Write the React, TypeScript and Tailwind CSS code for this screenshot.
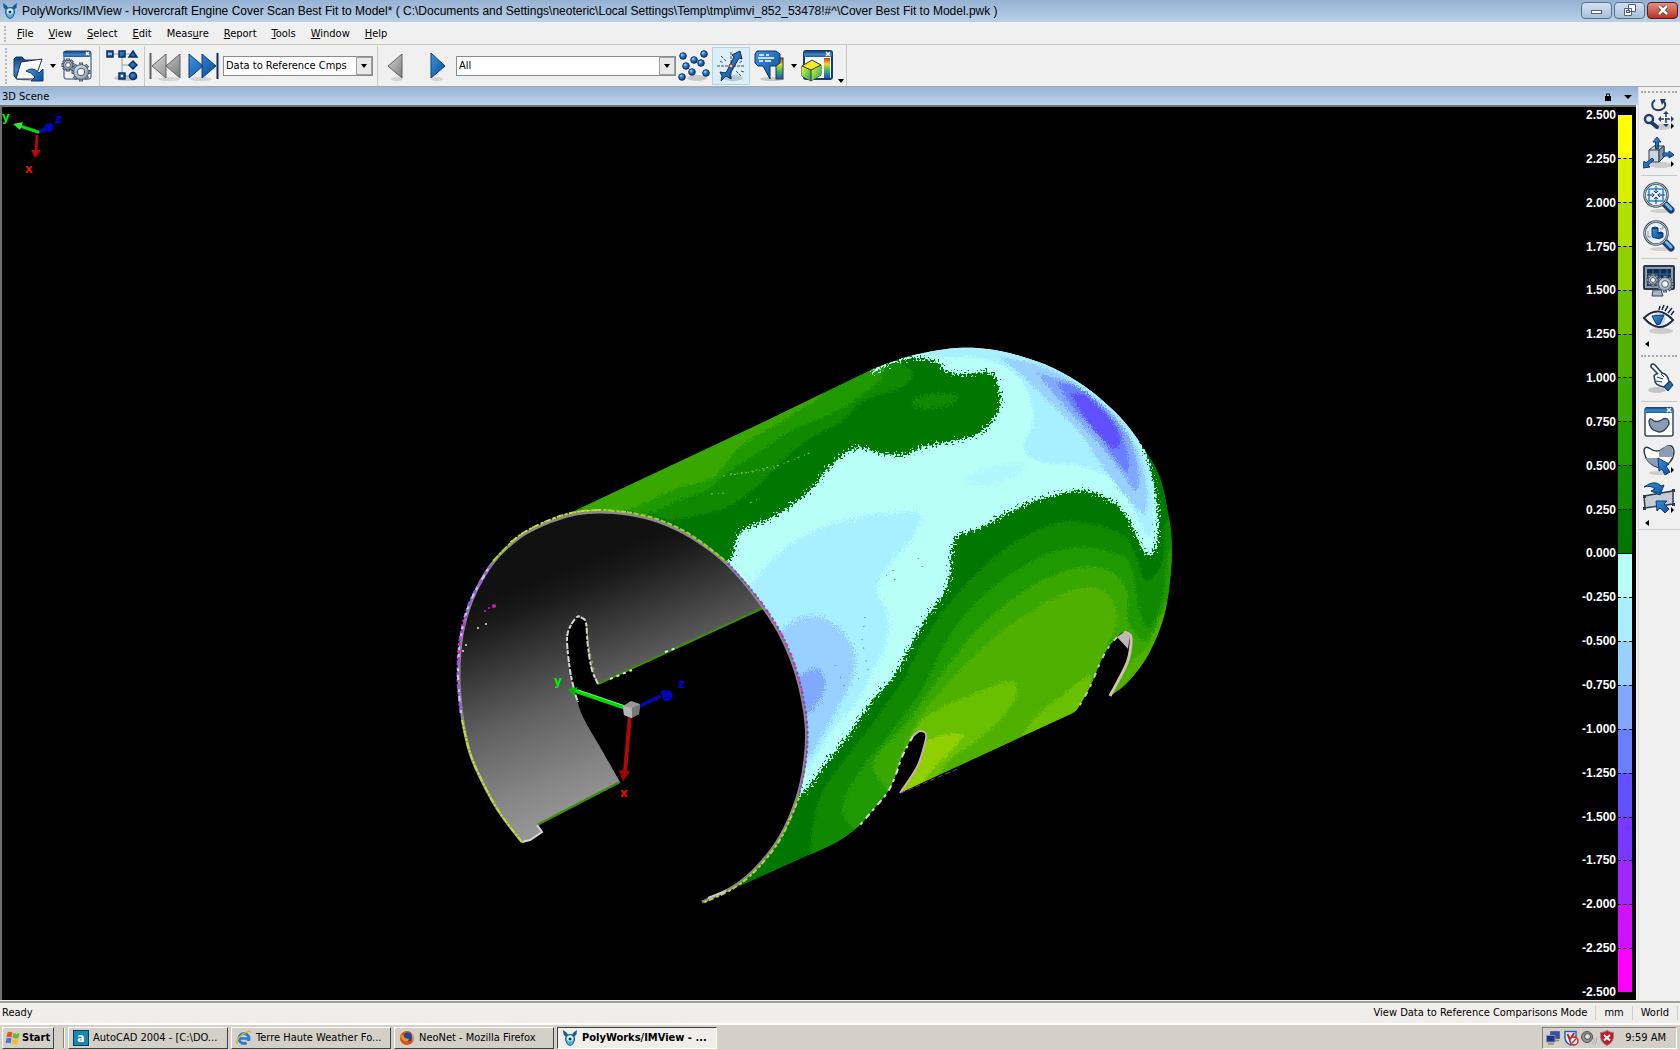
import type { ReactNode } from "react"

/* ---------- helpers ---------- */

type Pt = [number, number]

const pts = (s: string): Pt[] => s.trim().split(/\s+/).map((p) => p.split(",").map(Number) as Pt)

// Smooth run through the points, sharp at both ends
function curve(s: string) {
  const p = pts(s)
  let d = ""
  for (let i = 0; i < p.length - 1; i++) {
    const a = p[i - 1] ?? p[i]
    const b = p[i]
    const c = p[i + 1]
    const e = p[i + 2] ?? c
    const x1 = b[0] + (c[0] - a[0]) / 6
    const y1 = b[1] + (c[1] - a[1]) / 6
    const x2 = c[0] - (e[0] - b[0]) / 6
    const y2 = c[1] - (e[1] - b[1]) / 6
    d += `C${x1.toFixed(1)},${y1.toFixed(1)} ${x2.toFixed(1)},${y2.toFixed(1)} ${c[0]},${c[1]}`
  }
  return d
}

const open = (s: string) => `M${s.trim().split(/\s+/)[0]}${curve(s)}`
const shape = (s: string) => `${open(s)}Z`

/* ---------- scene geometry ---------- */

const rimLeft = "522,842 500,813 483,783 470,753 462,715 459,675 462,635 472,600 491,565 520,537 552,521 576,514 600,512"
const rimRight =
  "600,512 627,514 657,521 691,537 727,564 760,603 783,640 798,680 806,723 805,760 797,798 780,837 757,867 733,887 702,902"
const rim = `${rimLeft} ${rimRight.slice(8)}`

const body =
  `M552,521${curve("552,521 576,514 600,512 " + rimRight.slice(8))}L747,883` +
  curve("747,883 800,859 837,842 860,825 873,810 887,793 895,777 902,757 913,736 920,731 926,734 925,743 917,767 900,793") +
  "L1073,713" +
  curve("1073,713 1078,708 1090,687 1100,663 1108,648 1117,637 1124,632 1130,635 1131,643 1127,663 1110,696") +
  curve(
    "1110,696 1127,683 1147,657 1162,623 1169,590 1172,550 1169,517 1160,477 1143,447 1120,417 1087,388 1053,368 1020,356 987,349 957,348 923,353 900,359 873,369",
  ) +
  "L753,427L570,513Z"

const interior =
  open(`${rimLeft} 627,514 657,521 691,537 727,564 763,608`) +
  "L598,684" +
  curve("598,684 592,670 588,647 586,623 582,618 577,617 570,627 567,640 570,670 575,693 583,717 600,747 620,782") +
  "L537,825L542,832L530,840Z"

const greens = [
  { fill: "#108800", d: "670,520 700,515 727,507 753,490 780,463 807,440 840,423 860,403 873,397 903,387 913,373 903,366 880,355 700,420 600,500" },
  { fill: "#209800", d: "645,516 680,500 707,490 727,473 767,447 793,430 840,410 868,390 882,376 865,366 700,430 590,500" },
  { fill: "#38a800", d: "625,512 673,490 713,477 740,447 787,418 822,395 800,390 700,430 560,510" },
  { fill: "#108800", d: "810,856 813,823 823,790 847,757 870,727 903,680 930,630 967,583 1013,543 1057,523 1087,523 1113,530 1130,543 1143,577 1153,577 1163,557 1167,520 1190,520 1200,700 1000,780 880,850" },
  { fill: "#209800", d: "862,838 846,820 843,803 860,770 887,737 923,687 953,630 993,587 1040,557 1080,547 1113,553 1130,563 1140,613 1150,627 1163,597 1170,550 1190,560 1190,700 1000,780 900,830" },
  { fill: "#38a800", d: "886,788 873,767 883,747 907,723 937,680 980,627 1030,587 1080,567 1113,573 1127,593 1128,620 1142,640 1153,632 1168,600 1180,620 1170,700 1000,780 900,810" },
  { fill: "#50b000", d: "895,775 903,750 923,713 967,663 1013,623 1057,597 1090,587 1110,597 1117,620 1110,640 1100,665 1080,720 1000,770 900,800" },
  { fill: "#50b000", d: "1110,700 1128,665 1140,655 1152,640 1164,614 1170,640 1130,700" },
  { fill: "#68c000", d: "904,790 906,752 920,722 940,708 967,697 1010,681 1016,697 1000,720 975,742 950,760 930,790" },
  { fill: "#68c000", d: "1018,742 1035,718 1060,697 1090,676 1085,700 1074,716 1040,740" },
  { fill: "#90d000", d: "895,800 918,764 928,740 963,734 950,752 932,770 920,790" },
]

const light =
  "700,575 730,560 740,533 773,517 807,493 827,470 855,448 880,453 903,455 923,447 967,438 987,427 1000,407 999,390 994,375 983,372 965,374 947,372 937,362 913,358 890,364 872,371 880,340 960,320 1080,360 1130,420 1143,447 1153,480 1158,513 1157,543 1152,553 1145,553 1137,537 1127,517 1113,502 1090,492 1073,491 1040,499 1007,513 980,528 957,537 951,557 947,587 927,617 910,647 893,677 873,700 847,737 823,767 803,792 770,800 730,650"

const blues = [
  { fill: "#a8f0ff", d: "740,600 757,577 775,557 800,538 830,525 863,516 893,513 920,514 913,537 890,563 877,590 887,613 888,637 877,663 860,697 833,730 808,769 780,780" },
  { fill: "#98d0ff", d: "770,645 785,628 800,618 823,618 843,633 855,653 853,677 837,710 822,736 806,757 780,740" },
  { fill: "#80a8ff", d: "785,685 800,676 817,668 825,683 818,703 807,714 790,715" },
  { fill: "#a8f0ff", d: "923,351 945,357 980,358 1010,370 1028,392 1033,423 1024,450 1047,463 1080,466 1113,480 1130,503 1143,529 1149,536 1153,527 1152,480 1141,449 1110,395 1040,340 960,335" },
  { fill: "#98d0ff", d: "998,356 1020,373 1047,400 1080,433 1103,467 1123,493 1140,512 1146,510 1146,480 1134,444 1107,408 1067,378 1033,363" },
  { fill: "#80a8ff", d: "1037,373 1057,397 1080,423 1107,453 1127,480 1136,491 1139,473 1127,434 1100,403 1070,382" },
  { fill: "#6880ff", d: "1057,382 1073,407 1100,437 1124,470 1129,464 1122,434 1110,416 1090,396 1072,385" },
  { fill: "#6050ff", d: "1070,393 1083,415 1103,440 1116,449 1120,441 1116,428 1103,411 1085,395" },
]

const cyanPatch = "963,480 980,470 1010,464 1024,466 1015,476 985,487"

const scale = [
  "bg-[#ffff00]", "bg-[#d8f000]", "bg-[#b0e000]", "bg-[#90d000]", "bg-[#68c000]",
  "bg-[#50b000]", "bg-[#38a800]", "bg-[#209800]", "bg-[#108800]", "bg-[#007800]",
  "bg-[#b8fff8]", "bg-[#a8f0ff]", "bg-[#98d0ff]", "bg-[#80a8ff]", "bg-[#6880ff]",
  "bg-[#6050ff]", "bg-[#7838ff]", "bg-[#a028ff]", "bg-[#d010ff]", "bg-[#ff00ff]",
]
const labels = Array.from({ length: 21 }, (_, i) => (2.5 - i * 0.25).toFixed(3))

const menus: [string, string, string][] = [
  ["", "F", "ile"], ["", "V", "iew"], ["", "S", "elect"], ["", "E", "dit"], ["Meas", "u", "re"],
  ["", "R", "eport"], ["", "T", "ools"], ["", "W", "indow"], ["", "H", "elp"],
]

function Scene() {
  return (
    <svg className="absolute inset-0 w-full h-full" viewBox="2 107 1634 893" role="img" aria-label="Deviation map of the scanned engine cover">
      <defs>
        <clipPath id="body"><path d={body} /></clipPath>
        <linearGradient id="inside" gradientUnits="userSpaceOnUse" x1="583" y1="560" x2="673" y2="786">
          <stop offset="0" stopColor="#111" />
          <stop offset="0.1" stopColor="#1a1a1a" />
          <stop offset="0.3" stopColor="#3c3c3c" />
          <stop offset="0.52" stopColor="#626262" />
          <stop offset="0.8" stopColor="#858585" />
          <stop offset="1" stopColor="#999" />
        </linearGradient>
        <filter id="grain" filterUnits="userSpaceOnUse" x="400" y="300" width="820" height="640" colorInterpolationFilters="sRGB">
          <feTurbulence type="fractalNoise" baseFrequency="0.7" numOctaves="2" seed="4" />
          <feDisplacementMap in="SourceGraphic" scale="10" xChannelSelector="R" yChannelSelector="G" />
        </filter>
        <filter id="speckle" filterUnits="userSpaceOnUse" x="400" y="300" width="820" height="640" colorInterpolationFilters="sRGB">
          <feTurbulence type="fractalNoise" baseFrequency="0.9" numOctaves="2" seed="7" />
          <feDisplacementMap in="SourceGraphic" scale="18" xChannelSelector="R" yChannelSelector="G" />
        </filter>
        <filter id="coarse" filterUnits="userSpaceOnUse" x="400" y="300" width="820" height="640" colorInterpolationFilters="sRGB">
          <feTurbulence type="fractalNoise" baseFrequency="0.5" numOctaves="3" seed="9" />
          <feDisplacementMap in="SourceGraphic" scale="18" xChannelSelector="R" yChannelSelector="G" />
        </filter>
      </defs>

      {/* inner wall */}
      <path d={interior} fill="url(#inside)" />
      <path d="M763,608L598,684M620,782L537,825" stroke="#3c8c10" strokeWidth="2" fill="none" />
      <path d="M610,679L632,670M665,652L676,648" stroke="#d0f0d0" strokeWidth="2" strokeDasharray="3 4" fill="none" />
      <path
        d={open("598,684 592,670 588,647 586,623 582,618 577,617 570,627 567,640 570,670 575,693 578,702")}
        stroke="#d8d8d0" strokeWidth="2" strokeDasharray="6 1 4 2" fill="none"
      />
      <path d={open("594,670 589,647 587,630")} stroke="#98b850" strokeWidth="1" strokeDasharray="3 4" fill="none" />
      <path d="M537,825L542,832L530,840L522,842" stroke="#d8d8d8" strokeWidth="2" fill="none" />

      {/* outer surface */}
      <g clipPath="url(#body)">
        <path d={body} fill="#007800" />
        <g filter="url(#grain)">
          {greens.map((g, i) => <path key={i} d={shape(g.d)} fill={g.fill} />)}
        </g>
        <path d={shape("910,402 925,396 945,393 957,397 950,405 925,410")} fill="#108800" filter="url(#coarse)" />
        <path d={shape(light)} fill="#b8fff8" filter="url(#coarse)" />
        <g filter="url(#speckle)">
          {blues.slice(0, 3).map((b, i) => <path key={i} d={shape(b.d)} fill={b.fill} />)}
          <path d={shape(cyanPatch)} fill="#b0f6fc" />
        </g>
        <g filter="url(#grain)">
          {blues.slice(3).map((b, i) => <path key={i} d={shape(b.d)} fill={b.fill} />)}
        </g>
        <g stroke="#88c868" strokeWidth="1" fill="none" strokeDasharray="2 5 1 3">
          <path d="M723,476L745,473L760,469L780,465L812,452" />
          <path d="M730,474L752,472L775,468" />
          <path d="M711,494L725,493M750,503L760,498" />
        </g>
        <g stroke="#387878" strokeWidth="1" fill="none" strokeDasharray="1 8 1 12">
          <path d="M893,570L897,590M918,558L924,570M865,617L862,640L868,670L846,690L835,665" />
          <path d="M886,575L904,585" />
        </g>
      </g>

      {/* slot edges */}
      <g fill="none" strokeWidth="2">
        <path d={open("900,793 917,767 925,743 926,734 920,731 913,736")} stroke="#c8b0b0" strokeWidth="2" />
        <path d={open("913,736 902,757 895,777 887,793 873,810 860,825")} stroke="#d8d8d0" strokeDasharray="6 5 3 4" />
        <path d="M901,793L960,768" stroke="#8838a0" strokeWidth="1" strokeDasharray="5 3" />
        <path d={open("1110,696 1127,663 1131,643 1130,635 1124,632")} stroke="#d0c0b0" strokeWidth="3" />
        <path d="M1117,637L1124,632L1130,635L1128,649Z" fill="#c0b8b8" stroke="none" />
        <path d={open("1117,637 1108,648 1100,663 1090,687 1078,708")} stroke="#b8c8a0" strokeDasharray="5 7 3 6" />
      </g>

      {/* rim */}
      <g fill="none">
        <path d={open(rim)} stroke="#8a8888" strokeWidth="3" />
        <path d={open("522,842 500,813 483,783 470,753 462,720")} stroke="#c0e030" strokeWidth="2" strokeDasharray="7 1 3 1" />
        <path d={open("461,713 458,675 461,635 471,600 491,565")} stroke="#9858e0" strokeWidth="3" strokeDasharray="5 2 3 2" />
        <path d={open("461,713 458,675 461,635 471,600 491,564")} stroke="#c0c8f8" strokeWidth="2" strokeDasharray="3 9 5 4" />
        <path d={open("459,660 459,645 463,628 467,612")} stroke="#e020d0" strokeWidth="2" strokeDasharray="3 4" />
        <path d={open("493,561 520,535 552,519 576,512 600,510 626,512")} stroke="#a8d820" strokeWidth="2" strokeDasharray="7 2 3 1" />
        <path d={open("510,542 530,529 552,519 576,512 600,510")} stroke="#f0f040" strokeWidth="1" strokeDasharray="3 3" />
        <path d={open("627,512 657,519 691,535 727,562")} stroke="#a0d028" strokeWidth="2" strokeDasharray="5 2" />
        <path d={open("728,563 761,602 784,639 799,679 807,723 806,760 799,795")} stroke="#8840d8" strokeWidth="2" strokeDasharray="3 2 2 3" />
        <path d={open("761,602 784,639 799,679 803,700")} stroke="#d838c8" strokeWidth="2" strokeDasharray="3 9" />
        <path d={open("799,798 781,838 758,868 734,888 703,903")} stroke="#b0d828" strokeWidth="2" strokeDasharray="3 3 5 2" />
        <path d="M708,898L726,891" stroke="#c8c8d8" strokeWidth="2" />
      </g>
      <g fill="#c020c0">
        <circle cx="494" cy="606" r="2" /><circle cx="489" cy="608" r="1" /><circle cx="485" cy="611" r="1" />
        <g fill="#f0e0e8">
          <circle cx="486" cy="624" r="1" /><circle cx="478" cy="628" r="1" /><circle cx="466" cy="645" r="1" /><circle cx="463" cy="651" r="1" />
        </g>
      </g>

      {/* object axes */}
      <g strokeLinecap="round">
        <path d="M631,710L659,697" stroke="#0808a8" strokeWidth="4" />
        <path d="M660,691L669,690L673,694L671,700L664,701Z" fill="#0404b8" />
        <path d="M630,715L625,772" stroke="#b00808" strokeWidth="4" />
        <path d="M619,770L630,771L623,782Z" fill="#a00404" />
        <path d="M629,709L576,691" stroke="#08d808" strokeWidth="4" />
        <path d="M631,708L578,690" stroke="#60f860" strokeWidth="1" />
        <path d="M568,689L578,687L574,696Z" fill="#08b808" />
        <path d="M623,706L631,701L640,704L639,714L631,718L624,715Z" fill="#989898" />
        <path d="M623,706L632,708L632,718L624,715Z" fill="#b4b4b4" />
        <path d="M632,708L640,704L639,714L632,718Z" fill="#787878" />
      </g>
      {/* corner axes */}
      <g strokeLinecap="round">
        <path d="M39,132L48,128" stroke="#0808a8" strokeWidth="4" />
        <path d="M45,124L52,123L54,128L50,132L46,131Z" fill="#0404c8" />
        <path d="M37,136L36,152" stroke="#b00808" strokeWidth="3" />
        <path d="M31,150L41,150L35,158Z" fill="#c00808" />
        <path d="M38,132L20,126" stroke="#08d808" strokeWidth="3" />
        <path d="M13,124L23,122L20,130Z" fill="#30e830" />
      </g>
      <g className="font-['DejaVu_Sans',sans-serif] text-[12px] font-bold">
        <text x="554" y="685" fill="#00f000">y</text>
        <text x="678" y="688" fill="#0000e0">z</text>
        <text x="620" y="797" fill="#e81010">x</text>
        <text x="2" y="121" fill="#00f000">y</text>
        <text x="55" y="123" fill="#0000e0">z</text>
        <text x="25" y="173" fill="#e81010">x</text>
      </g>
    </svg>
  )
}

/* ---------- icons ---------- */

function Icon({ children, className = "w-8 h-8" }: { children: ReactNode; className?: string }) {
  return <svg className={`${className} shrink-0`} viewBox="0 0 32 32" aria-hidden="true">{children}</svg>
}

function Defs() {
  return (
    <svg className="absolute w-0 h-0" aria-hidden="true">
      <defs>
        <linearGradient id="blue" x1="0" y1="0" x2="1" y2="1"><stop offset="0" stopColor="#3c94e0" /><stop offset="1" stopColor="#0c4c98" /></linearGradient>
        <linearGradient id="navy" x1="0" y1="0" x2="0" y2="1"><stop offset="0" stopColor="#123c74" /><stop offset="0.6" stopColor="#3c88cc" /><stop offset="1" stopColor="#1c5c9c" /></linearGradient>
        <linearGradient id="grey" x1="0" y1="0" x2="1" y2="1"><stop offset="0" stopColor="#d8d8d8" /><stop offset="1" stopColor="#7c7c7c" /></linearGradient>
        <linearGradient id="steel" x1="0" y1="0" x2="1" y2="1"><stop offset="0" stopColor="#dde3ea" /><stop offset="1" stopColor="#8c9caf" /></linearGradient>
        <linearGradient id="rainbow" x1="0" y1="0" x2="0" y2="1">
          <stop offset="0" stopColor="#e03010" /><stop offset="0.3" stopColor="#f0d820" /><stop offset="0.6" stopColor="#40c060" /><stop offset="1" stopColor="#2050d0" />
        </linearGradient>
        <linearGradient id="facet" x1="0" y1="0" x2="1" y2="1"><stop offset="0" stopColor="#f0f040" /><stop offset="0.5" stopColor="#80d040" /><stop offset="1" stopColor="#2888c0" /></linearGradient>
        <radialGradient id="ball" cx="0.35" cy="0.3" r="0.7"><stop offset="0" stopColor="#a0d8ff" /><stop offset="0.5" stopColor="#2878c4" /><stop offset="1" stopColor="#0c3c80" /></radialGradient>
      </defs>
    </svg>
  )
}

// Toothed wheel: eight teeth laid round the rim
const gear = (cx: number, cy: number, r: number) => (
  <g stroke="#4c5c70">
    {[0, 45, 90, 135].map((a) => (
      <rect key={a} x={cx - 1.5} y={cy - r} width="3" height={r * 2} fill="#a8b4c4" transform={`rotate(${a} ${cx} ${cy})`} />
    ))}
    <circle cx={cx} cy={cy} r={r - 1.6} fill="url(#steel)" />
    <circle cx={cx} cy={cy} r={r * 0.42} fill="#f4f4f4" />
  </g>
)

const OpenIcon = () => (
  <Icon>
    <ellipse cx="18" cy="29" rx="13" ry="2" fill="#c8c8c8" />
    <path d="M1,9L3,7H9L12,10H23V14L16,29H4L1,26Z" fill="url(#navy)" stroke="#123c74" />
    <path d="M8,12L29,9L22,29H3Z" fill="#fafafa" stroke="#28323c" />
    <path d="M13,21Q20,16 26,23L30,19V31H18L22,27Q18,22 13,21Z" fill="url(#blue)" stroke="#0c3c74" />
  </Icon>
)
const GearsIcon = () => (
  <Icon>
    <rect x="3" y="1" width="27" height="28" rx="2" fill="#f0f0f0" stroke="#28486c" />
    <rect x="2" y="1" width="28" height="6" rx="2" fill="url(#navy)" />
    <path d="M25,2L28,5M28,2L25,5" stroke="#fff" strokeWidth="1.5" />
    {gear(7, 15, 6)}
    {gear(20, 22, 9)}
  </Icon>
)
const TreeIcon = () => (
  <Icon>
    <ellipse cx="20" cy="28" rx="12" ry="3" fill="#c8c8c8" />
    <path d="M7,4H26M16,4V26H26M16,15H26" stroke="#98a0a8" fill="none" />
    <g fill="url(#blue)" stroke="#0c2c60" strokeWidth="1.5">
      <rect x="1" y="1" width="6" height="6" /><rect x="13" y="1" width="6" height="6" /><path d="M27,1L31,7H23Z" />
      <path d="M27,11L31,15L27,19L23,15Z" /><rect x="13" y="23" width="6" height="6" /><circle cx="27" cy="26" r="3.5" />
    </g>
    <path d="M2,4H6" stroke="#fff" /><rect x="15" y="25" width="2" height="2" fill="#fff" />
  </Icon>
)
const RewindIcon = () => (
  <Icon>
    <ellipse cx="20" cy="29" rx="11" ry="2" fill="#d4d4d4" />
    <path d="M1.5,3V29" stroke="#606060" strokeWidth="2" />
    <path d="M17,4L3,16L17,28ZM31,4L17,16L31,28Z" fill="url(#grey)" stroke="#606060" />
  </Icon>
)
const ForwardIcon = () => (
  <Icon>
    <ellipse cx="14" cy="29" rx="11" ry="2" fill="#d4d4d4" />
    <path d="M30.5,3V29" stroke="#182c50" strokeWidth="2" />
    <path d="M2,4L16,16L2,28ZM15,4L29,16L15,28Z" fill="url(#blue)" stroke="#0c3c74" />
  </Icon>
)
const PrevIcon = () => (
  <Icon>
    <ellipse cx="15" cy="29" rx="6" ry="2" fill="#d4d4d4" />
    <path d="M20,4L6,16L20,28Z" fill="url(#grey)" stroke="#606060" />
  </Icon>
)
const NextIcon = () => (
  <Icon>
    <ellipse cx="15" cy="29" rx="6" ry="2" fill="#d4d4d4" />
    <path d="M9,3L23,16L9,28Z" fill="url(#blue)" stroke="#0c3c74" />
  </Icon>
)
const PointsIcon = () => (
  <Icon>
    <ellipse cx="19" cy="28" rx="10" ry="3" fill="#c8c8c8" />
    <g fill="url(#ball)" stroke="#0c3468">
      {pts("5,6 26,4 16,10 8,16 23,13 14,22 28,23 4,27").map(([x, y]) => <circle key={x} cx={x} cy={y} r="3.3" />)}
    </g>
  </Icon>
)
const CompareIcon = () => (
  <Icon>
    <ellipse cx="18" cy="28" rx="10" ry="3" fill="#b8c8d0" />
    <path d="M16,2V30M2,16H30M6,6L11,11M26,26L21,21M8,25L12,21M5,11L8,13M27,11L24,13M26,21L29,22" stroke="#484848" strokeDasharray="3 1" />
    <path d="M25,1L27,9L24,8L15,24L16,29L11,26L6,31L7,26L5,22L11,23L19,7L17,5Z" fill="url(#blue)" stroke="#0c2c60" />
    <circle cx="16" cy="16" r="2" fill="#c0d8f0" stroke="#802020" />
  </Icon>
)
const CalloutIcon = () => (
  <Icon>
    <ellipse cx="18" cy="29" rx="12" ry="2" fill="#c8c8c8" />
    <rect x="22" y="8" width="7" height="21" fill="url(#rainbow)" stroke="#303030" />
    <path d="M3,1H22L26,4V13L22,16H16V29L9,16H4L1,13V4Z" fill="url(#blue)" stroke="#0c3468" />
    <path d="M5,5H10M12,5H15M4,8H20M5,11H9M11,11H17" stroke="#fff" strokeWidth="1.5" />
  </Icon>
)
const CubeWindowIcon = () => (
  <Icon>
    <rect x="3" y="1" width="28" height="28" rx="2" fill="#f8f8f8" stroke="#183c6c" strokeWidth="2" />
    <rect x="3" y="1" width="28" height="6" rx="2" fill="url(#navy)" />
    <path d="M25,2L29,6M29,2L25,6" stroke="#fff" strokeWidth="1.5" />
    <rect x="23" y="8" width="6" height="20" fill="url(#rainbow)" />
    <path d="M1,16L11,10L20,15V25L10,31L1,26Z" fill="#f0e830" stroke="#284018" />
    <path d="M1,16L10,20V31L1,26Z" fill="url(#facet)" /><path d="M10,20L20,15V25L10,31Z" fill="url(#facet)" />
    <path d="M1,16L10,20L20,15M10,20V31" fill="none" stroke="#284018" />
  </Icon>
)

const RotateIcon = () => (
  <Icon>
    <path d="M12,1Q7,5 11,10Q16,13 21,9Q24,5 20,2" fill="none" stroke="#243c68" strokeWidth="2" />
    <path d="M17,0H23L19,6Z" fill="#243c68" />
    <ellipse cx="19" cy="28" rx="9" ry="3" fill="#ccc" />
    <circle cx="6" cy="20" r="4" fill="#e0f0fc" stroke="#243c68" strokeWidth="2.5" />
    <path d="M9,24L14,28" stroke="#243c68" strokeWidth="4" strokeLinecap="round" />
    <path d="M23,13V27M16,20H30" stroke="#243c68" strokeWidth="1.5" strokeDasharray="5 1" />
    <path d="M23,12L26,15H20ZM23,28L26,25H20ZM15,20L18,17V23ZM31,20L28,17V23Z" fill="#243c68" />
    <path d="M28,24V30L31,27Z" fill="#000" />
  </Icon>
)
const AxesIcon = () => (
  <Icon>
    <ellipse cx="18" cy="28" rx="12" ry="3" fill="#ccc" />
    <path d="M6,13L11,9H21V20L16,25H6Z" fill="#cdd5de" stroke="#303c48" />
    <path d="M6,13H16V25M16,13L21,9" fill="none" stroke="#303c48" /><path d="M16,13L21,9V20L16,25Z" fill="#8894a4" stroke="#303c48" />
    <g fill="url(#blue)" stroke="#0c3c74"><path d="M14,0L18,5H15.500V12H12.500V5H10Z" /><path d="M31,18L26,14V16H20V19H26V21Z" /><path d="M0,31L1,24L3,26L9,21L11,23L5,28L7,30Z" /></g>
    <path d="M28,24V30L31,27Z" fill="#000" />
  </Icon>
)
const Magnifier = ({ children }: { children: ReactNode }) => (
  <Icon>
    <ellipse cx="18" cy="29" rx="11" ry="2" fill="#d0d0d0" />
    <path d="M22,22L28,28" stroke="#16406e" strokeWidth="7" strokeLinecap="round" />
    <path d="M23,22L28,27" stroke="#70b8ec" strokeWidth="3" strokeLinecap="round" />
    <circle cx="13" cy="13" r="11.500" fill="#e4f0f4" stroke="#404c58" strokeWidth="2.500" />
    <circle cx="13" cy="13" r="11.500" fill="none" stroke="#b8c8d4" />
    {children}
  </Icon>
)
const ZoomFitIcon = () => (
  <Magnifier>
    <rect x="6" y="7" width="14" height="12" fill="none" stroke="#3484c4" strokeWidth="1.500" />
    <path d="M13,4V11M13,15V22M4,13H11M15,13H22M11,9L13,11L15,9M11,17L13,15L15,17M9,11L11,13L9,15M17,11L15,13L17,15" stroke="#183c6c" fill="none" />
  </Magnifier>
)
const ZoomObjIcon = () => (
  <Magnifier>
    <path d="M5,11V17H8M20,6V9H17" fill="none" stroke="#88949c" />
    <path d="M9,8Q12,6 15,8V13Q18,11 20,13V17Q16,20 13,18Q9,18 9,16Z" fill="url(#blue)" stroke="#0c3468" />
    <path d="M9,8Q12,10 15,8M14,13Q17,15 20,13" stroke="#0c3468" fill="none" />
  </Magnifier>
)
const MonitorIcon = () => (
  <Icon>
    <rect x="1" y="1" width="30" height="23" rx="1" fill="#8c9cac" stroke="#283848" strokeWidth="2" />
    <rect x="4" y="4" width="24" height="17" fill="#142c4c" />
    <path d="M4,9H28M4,15H28M10,4V21M17,4V21M24,4V21" stroke="#2c6ca4" />
    {gear(10, 15, 6)}
    {gear(22, 19, 8)}
    <path d="M10,25H18L20,31H9Z" fill="#a8b4c0" stroke="#384858" />
  </Icon>
)
const EyeIcon = () => (
  <Icon>
    <ellipse cx="18" cy="28" rx="12" ry="3" fill="#ccc" />
    <path d="M19,7L21,2M22,8L25,3M25,10L29,5M28,12L31,8M16,7L17,3" stroke="#1c2c48" strokeWidth="1.500" />
    <path d="M1,15Q15,1 30,17Q16,32 1,15Z" fill="#fff" stroke="#1c2c48" strokeWidth="2" />
    <circle cx="16" cy="16" r="6.500" fill="#c0d8e8" />
    <path d="M9,13L21,12L17,21L14,22Z" fill="url(#blue)" stroke="#0c3468" />
  </Icon>
)
const HandIcon = () => (
  <Icon>
    <ellipse cx="14" cy="27" rx="9" ry="3" fill="#c4c4c4" />
    <path d="M8,2Q10,0 12,2L19,10Q25,11 26,19L21,24Q12,22 12,18L11,13Q13,10 15,11L8,4Z" fill="#f4f8fc" stroke="#283848" strokeWidth="1.500" />
    <path d="M14,14L20,16M13,18L19,19M18,11L21,14" stroke="#283848" fill="none" />
    <path d="M21,24L27,18L30,22L25,28Z" fill="#2468a4" stroke="#123458" />
  </Icon>
)
const RegionWindowIcon = () => (
  <Icon>
    <rect x="2" y="2" width="28" height="28" rx="2" fill="#fff" stroke="#384858" strokeWidth="1.500" />
    <rect x="2" y="1" width="28" height="6" rx="2" fill="url(#navy)" />
    <path d="M24,2L28,6M28,2L24,6" stroke="#fff" strokeWidth="1.500" />
    <path d="M8,13Q14,18 20,13Q26,11 26,18Q22,26 16,26Q6,24 6,15Q7,12 8,13Z" fill="#8c9cb4" stroke="#384858" strokeWidth="1.500" />
  </Icon>
)
const RegionPickIcon = () => (
  <Icon>
    <ellipse cx="16" cy="29" rx="10" ry="2" fill="#ccc" />
    <path d="M1,6Q2,2 6,4Q14,10 21,4Q30,-2 31,8Q30,20 17,24Q2,20 1,6Z" fill="#fff" stroke="#303c48" strokeWidth="1.500" />
    <path d="M16,7Q20,5 23,2Q31,0 30,13H16Z" fill="#8c9cb4" /><path d="M3,14H16V23Q6,21 3,14Z" fill="#8c9cb4" />
    <path d="M15,14L26,20L23,22L27,28L22,31L19,25L16,27Z" fill="url(#blue)" stroke="#0c3c74" />
    <path d="M28,23V29L31,26Z" fill="#000" />
  </Icon>
)
const TransformIcon = () => (
  <Icon>
    <path d="M1,14L30,9V22L2,26Z" fill="#c4ccd8" stroke="#303c48" strokeWidth="1.500" />
    <path d="M0,13h3v3h-3zM29,7h3v3h-3zM29,21h3v3h-3zM0,25h3v3h-3z" fill="#303c48" />
    <path d="M1,5Q12,-3 18,4L21,3L17,13L8,9L12,7Q8,3 1,5Z" fill="url(#blue)" stroke="#0c3c74" />
    <path d="M13,19H24L21,22L26,27L22,31L17,26L14,29Z" fill="url(#blue)" stroke="#0c3c74" />
    <path d="M28,25V31L31,28Z" fill="#000" />
  </Icon>
)

const MascotIcon = () => (
  <Icon className="w-4 h-4">
    <path d="M2,0L9,5L14,12L9,15L3,9ZM30,0L23,5L18,12L23,15L29,9Z" fill="#1c5c90" />
    <path d="M16,9Q26,10 25,20Q22,31 16,31Q10,31 7,20Q6,10 16,9Z" fill="#58b0dc" stroke="#1c5c90" strokeWidth="2" />
    <circle cx="16" cy="17" r="6" fill="#e0f4fc" /><circle cx="16" cy="18" r="3" fill="#103858" />
  </Icon>
)

/* ---------- chrome ---------- */

const Sep = () => <div className="w-px h-10 bg-[#c8c8c4] shrink-0" />
const Caret = () => <svg className="w-[6px] h-[4px] shrink-0" viewBox="0 0 6 4" aria-hidden="true"><path d="M0,0H6L3,4Z" /></svg>

function ToolButton({ label, children, className = "" }: { label: string; children: ReactNode; className?: string }) {
  return (
    <button type="button" aria-label={label} className={`flex items-center justify-center shrink-0 ${className}`}>
      {children}
    </button>
  )
}

function Combo({ label, value, className }: { label: string; value: string; className: string }) {
  return (
    <div className={`flex h-5 bg-white border border-[#8c8c90] shrink-0 ${className}`}>
      <select aria-label={label} className="flex-1 min-w-0 appearance-none bg-transparent pl-0.5 outline-none">
        <option>{value}</option>
      </select>
      <span className="w-4 flex items-center justify-center bg-[#e8e8e8] border border-[#a0a0a4] pointer-events-none">
        <Caret />
      </span>
    </div>
  )
}

const Grip = () => <div className="mx-auto w-9 border-t-2 border-dotted border-[#a8a8a8]" />
const Rule = () => <div className="w-9 h-px bg-[#c8c8c4] shrink-0" />
const Left = () => <svg className="w-1 h-[6px] self-start ml-1.5" viewBox="0 0 4 6" aria-hidden="true"><path d="M4,0V6L0,3Z" /></svg>

function Task({ label, icon, active }: { label: string; icon: ReactNode; active?: boolean }) {
  return (
    <button
      type="button"
      className={
        active
          ? "w-40 h-[22px] px-1 flex items-center gap-1 font-bold bg-[#f0eeea] border border-t-[#404040] border-l-[#404040] border-r-white border-b-white"
          : "w-40 h-[22px] px-1 flex items-center gap-1 bg-[#d4d0c8] border border-t-white border-l-white border-r-[#404040] border-b-[#404040]"
      }
    >
      {icon}
      <span className="whitespace-nowrap">{label}</span>
    </button>
  )
}

export default function App() {
  return (
    <div className="h-screen flex flex-col overflow-hidden bg-[#f0f0f0] text-black text-[11px] leading-[14px] font-['DejaVu_Sans_Condensed','DejaVu_Sans',sans-serif]">
      <Defs />

      {/* Title bar */}
      <header className="h-[22px] shrink-0 flex items-center pl-0.5 pr-0.5 bg-linear-to-b from-[#96b2d2] to-[#bad0e8]">
        <MascotIcon />
        <h1 className="flex-1 ml-1 text-[12px] font-['Liberation_Sans',Arial,sans-serif] whitespace-nowrap">
          PolyWorks/IMView - Hovercraft Engine Cover Scan Best Fit to Model* ( C:\Documents and Settings\neoteric\Local Settings\Temp\tmp\imvi_852_53478!#^\Cover Best Fit to Model.pwk )
        </h1>
        <div className="flex gap-0.5 pb-0.5">
          <button type="button" aria-label="Minimize" className="w-[31px] h-[17px] rounded-sm border border-[#58708c] bg-linear-to-b from-[#d0e0f0] to-[#a8c0dc] flex justify-center items-end pb-1">
            <span className="w-[11px] h-1 bg-white border border-[#506078]" />
          </button>
          <button type="button" aria-label="Restore" className="w-[31px] h-[17px] rounded-sm border border-[#58708c] bg-linear-to-b from-[#d0e0f0] to-[#a8c0dc] flex justify-center items-center">
            <svg className="w-3 h-3" viewBox="0 0 12 12"><path d="M4.500,.5H11.500V7.500H4.500ZM.5,4.500H7.500V11.500H.5Z" fill="#fff" stroke="#506078" /><rect x="2.500" y="6.500" width="3" height="2" fill="#c0d0e4" stroke="#506078" /></svg>
          </button>
          <button type="button" aria-label="Close" className="w-[31px] h-[17px] rounded-sm border border-[#581c18] bg-linear-to-b from-[#e09080] to-[#b83020] flex justify-center items-center">
            <svg className="w-3 h-[10px]" viewBox="0 0 12 10"><path d="M2,1L10,9M10,1L2,9" stroke="#603030" strokeWidth="4" /><path d="M2,1L10,9M10,1L2,9" stroke="#fff" strokeWidth="2.500" /></svg>
          </button>
        </div>
      </header>

      {/* Menu */}
      <nav className="h-[23px] shrink-0 flex items-center pt-0.5 border-b border-[#c8c8c0]">
        <div className="w-[9px] h-4 flex justify-center"><div className="h-full border-l-2 border-dotted border-[#b8b8b8]" /></div>
        {menus.map(([pre, key, rest]) => (
          <button key={key + rest} type="button" className="pl-2 pr-[7px]">
            {pre}<span className="underline">{key}</span>{rest}
          </button>
        ))}
      </nav>

      {/* Toolbar */}
      <div className="h-[42px] shrink-0 flex border-b border-[#a8a8a8]">
        <div className="flex items-center border-r border-[#c8c8c0] pr-px">
          <div className="w-[13px] h-9 flex justify-center pr-0.5"><div className="h-full border-l-2 border-dotted border-[#b8b8b8]" /></div>
          <ToolButton label="Open"><OpenIcon /></ToolButton>
          <ToolButton label="Open options" className="w-4 h-8"><Caret /></ToolButton>
          <ToolButton label="Options" className="mr-1.5"><GearsIcon /></ToolButton>
          <Sep />
          <ToolButton label="Tree view" className="mx-1.5"><TreeIcon /></ToolButton>
          <Sep />
          <ToolButton label="First" className="ml-1 mr-1.5"><RewindIcon /></ToolButton>
          <ToolButton label="Last"><ForwardIcon /></ToolButton>
          <Combo label="Comparison type" value="Data to Reference Cmps" className="w-[150px] ml-1 mr-1" />
          <Sep />
          <ToolButton label="Previous" className="ml-1 mr-2"><PrevIcon /></ToolButton>
          <ToolButton label="Next" className="mr-0.5"><NextIcon /></ToolButton>
          <Combo label="Filter" value="All" className="w-[220px] mr-0.5" />
          <ToolButton label="Show points" className="mr-0.5"><PointsIcon /></ToolButton>
          <ToolButton label="Compare" className="w-[38px] h-[38px] bg-[#dceef8] border border-[#a8d8f0] mr-1"><CompareIcon /></ToolButton>
          <ToolButton label="Annotations"><CalloutIcon /></ToolButton>
          <ToolButton label="Annotation options" className="w-[15px] h-8"><Caret /></ToolButton>
          <ToolButton label="Color map" className="mr-1"><CubeWindowIcon /></ToolButton>
          <ToolButton label="More buttons" className="w-2 h-9 items-end pb-px"><Caret /></ToolButton>
        </div>
      </div>

      <div className="flex-1 min-h-0 flex">
        {/* 3D scene */}
        <main className="flex-1 min-w-0 flex flex-col">
          <div className="h-[18px] shrink-0 flex items-center pl-0.5 pt-px bg-linear-to-b from-[#98b4d4] to-[#bcd2ec]">
            <h2 className="flex-1">3D Scene</h2>
            <button type="button" aria-label="Lock" className="w-5 flex justify-center">
              <svg className="w-[6px] h-2" viewBox="0 0 6 8"><path d="M0,3H6V8H0Z" /><path d="M1.500,3V1H4.500V3" fill="none" stroke="#000" /></svg>
            </button>
            <button type="button" aria-label="Scene menu" className="w-5 flex justify-center">
              <svg className="w-2 h-1" viewBox="0 0 8 4"><path d="M0,0H8L4,4Z" /></svg>
            </button>
          </div>
          <div className="flex-1 min-h-0 relative bg-black border-t-2 border-l-2 border-[#707070] mr-0.5">
            <Scene />
            {/* Color scale */}
            <div className="absolute inset-y-0 right-1 flex gap-0.5 pt-[2px] pb-[2px] text-white font-bold text-[12px] leading-3 font-['Liberation_Sans',Arial,sans-serif]">
              <ol className="flex flex-col justify-between text-right">
                {labels.map((l) => <li key={l}>{l}</li>)}
              </ol>
              <div className="w-[14px] my-1.5 flex flex-col">
                {scale.map((c, i) => (
                  <div key={c} className={`flex-1 ${c} ${i === 0 ? "" : i === 10 ? "border-t border-black" : "border-t border-dashed border-black"}`} />
                ))}
              </div>
            </div>
          </div>
        </main>

        {/* Side toolbar */}
        <aside className="w-[42px] shrink-0 border-l border-[#e0dcd8]">
          <div className="h-[443px] flex flex-col items-center border-b border-[#c8c8c0] pt-1 pr-0.5">
            <Grip />
            <ToolButton label="Rotate, zoom, pan" className="mt-1.5"><RotateIcon /></ToolButton>
            <ToolButton label="Standard views" className="mt-1.5 mb-1.5"><AxesIcon /></ToolButton>
            <Rule />
            <ToolButton label="Zoom to fit" className="mt-1.5"><ZoomFitIcon /></ToolButton>
            <ToolButton label="Zoom to selection" className="my-1.5"><ZoomObjIcon /></ToolButton>
            <Rule />
            <ToolButton label="Display options" className="mt-1.5"><MonitorIcon /></ToolButton>
            <ToolButton label="Visibility" className="my-1.5"><EyeIcon /></ToolButton>
            <Left />
            <div className="mt-2 w-9"><Grip /></div>
            <ToolButton label="Pick" className="my-1.5"><HandIcon /></ToolButton>
            <Rule />
            <ToolButton label="Region window" className="mt-1"><RegionWindowIcon /></ToolButton>
            <ToolButton label="Select region" className="my-1.5"><RegionPickIcon /></ToolButton>
            <ToolButton label="Transform" className="mb-1.5"><TransformIcon /></ToolButton>
            <Left />
          </div>
        </aside>
      </div>

      {/* Status bar */}
      <footer className="h-[22px] mt-px shrink-0 flex items-center border-t-2 border-[#a0a09c] bg-[#f0eeec]">
        <p className="flex-1 pl-0.5">Ready</p>
        <p className="px-2 border-r border-[#d0ccc8]">View Data to Reference Comparisons Mode</p>
        <p className="px-2 border-r border-[#d0ccc8]">mm</p>
        <p className="px-2 mr-0.5 border-r border-[#d0ccc8]">World</p>
      </footer>

      {/* Taskbar */}
      <div className="h-[27px] shrink-0 flex items-center gap-[3px] px-0.5 bg-[#d4d0c8] border-t-2 border-white">
        <button type="button" className="w-[52px] h-[22px] mr-1.5 px-0.5 flex items-center gap-px font-bold border border-t-white border-l-white border-r-[#404040] border-b-[#404040]">
          <Icon className="w-4 h-4">
            <path d="M5,5Q10,2 15,5L13,15Q8,12 3,15Z" fill="#e8502c" /><path d="M17,6Q23,9 29,6L27,16Q21,18 15,15Z" fill="#68b830" />
            <path d="M3,17Q8,14 13,17L11,27Q6,24 1,27Z" fill="#3c78e0" /><path d="M15,18Q21,20 27,18L25,28Q18,30 13,27Z" fill="#f0c020" />
          </Icon>
          Start
        </button>
        <div className="w-0.5 h-5 border-l border-r border-l-[#808080] border-r-[#f8f8f8]" />
        <Task
          label="AutoCAD 2004 - [C:\DO..."
          icon={
            <span className="w-4 h-4 shrink-0 flex items-center justify-center bg-[#1888b0] border border-[#083c58] text-white font-bold text-[12px] leading-3">a</span>
          }
        />
        <Task
          label="Terre Haute Weather Fo..."
          icon={
            <Icon className="w-4 h-4">
              <circle cx="16" cy="17" r="10" fill="none" stroke="#2080d8" strokeWidth="6" /><path d="M8,17H26" stroke="#2080d8" strokeWidth="5" />
              <path d="M20,22H30V28H22Z" fill="#d4d0c8" /><path d="M3,28Q-2,20 14,8Q28,-1 30,5" fill="none" stroke="#e8b020" strokeWidth="3" />
            </Icon>
          }
        />
        <Task
          label="NeoNet - Mozilla Firefox"
          icon={
            <Icon className="w-4 h-4">
              <circle cx="16" cy="16" r="14" fill="#d85010" /><circle cx="18" cy="14" r="9" fill="#2048a0" />
              <path d="M3,8Q10,10 12,16L20,18Q18,26 10,22Q2,16 3,8Z" fill="#f09020" /><path d="M24,4Q32,12 27,23Q28,12 24,4Z" fill="#f8c838" />
            </Icon>
          }
        />
        <Task label="PolyWorks/IMView - ..." icon={<MascotIcon />} active />
        <div className="ml-auto mr-px h-[22px] pl-0.5 pr-2.5 flex items-center gap-0.5 border border-t-[#808080] border-l-[#808080] border-r-white border-b-white">
          <Icon className="w-4 h-4">
            <path d="M11,3H29V17H11Z" fill="#3450b0" stroke="#606878" strokeWidth="2" /><path d="M3,11H20V24H3Z" fill="#1c3490" stroke="#8890a0" strokeWidth="2" /><path d="M6,28H18M20,21H28" stroke="#888" strokeWidth="3" />
          </Icon>
          <Icon className="w-4 h-4">
            <path d="M4,3H26V16Q24,26 15,30Q5,26 4,16Z" fill="#e8f0f8" stroke="#1868b0" strokeWidth="3" /><path d="M9,8L14,20L22,6" stroke="#c02020" strokeWidth="4" fill="none" />
            <circle cx="22" cy="22" r="8" fill="#fff" stroke="#e02020" strokeWidth="3" /><path d="M17,27L27,17" stroke="#e02020" strokeWidth="3" />
          </Icon>
          <Icon className="w-4 h-4">
            <circle cx="12" cy="14" r="11" fill="#909494" stroke="#505454" strokeWidth="2" /><circle cx="13" cy="13" r="6" fill="#d8dcdc" stroke="#404444" strokeWidth="2" />
            <path d="M22,28Q28,24 26,16M26,31Q33,25 31,16" fill="none" stroke="#a8a8d0" strokeWidth="2" />
          </Icon>
          <Icon className="w-4 h-4">
            <path d="M16,1Q22,5 29,5V15Q27,26 16,31Q5,26 3,15V5Q10,5 16,1Z" fill="#c81828" stroke="#888" strokeWidth="2" /><path d="M10,10L22,21M22,10L10,21" stroke="#fff" strokeWidth="4" />
          </Icon>
          <time className="ml-2">9:59 AM</time>
        </div>
      </div>
    </div>
  )
}
